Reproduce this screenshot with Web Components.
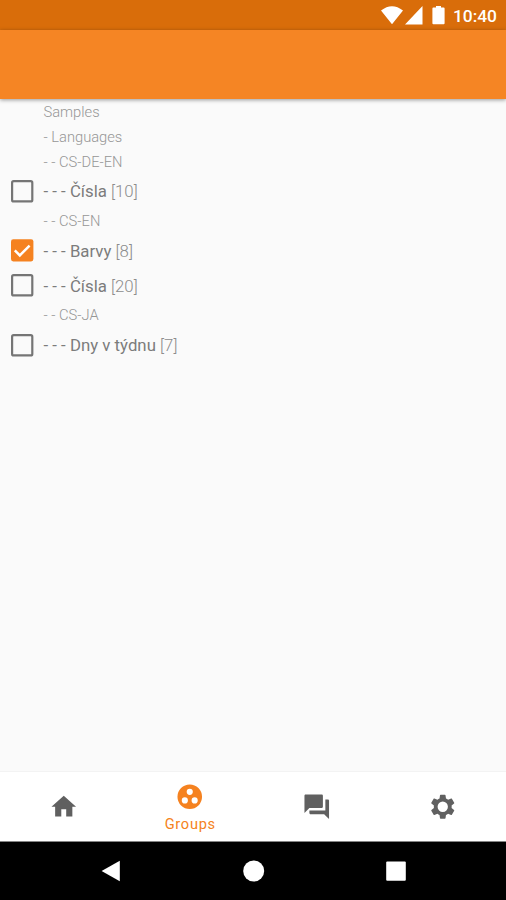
<!DOCTYPE html>
<html lang="cs"><head><meta charset="utf-8"><title>Groups</title>
<style>html,body{margin:0;height:100%;overflow:hidden}body{font-family:Roboto,"Noto Sans",sans-serif;background:#fafafa}</style></head>
<body><phone-app></phone-app>
<script>
const define=(name,html,init)=>customElements.define(name,class extends HTMLElement{
  connectedCallback(){ if(this.shadowRoot)return; this.attachShadow({mode:'open'}).innerHTML=html; if(init)init.call(this,this.shadowRoot); }
});
const icons={
 home:'<path d="M10 20v-6h4v6h5v-8h3L12 3 2 12h3v8z"/>',
 groups:'<path fill-rule="evenodd" d="M12 2a10 10 0 1 0 0 20 10 10 0 0 0 0-20zM8 17.5a2.5 2.5 0 1 1 0-5 2.5 2.5 0 0 1 0 5zM9.5 8a2.5 2.5 0 1 1 5 0 2.5 2.5 0 0 1-5 0zM16 17.5a2.5 2.5 0 1 1 0-5 2.5 2.5 0 0 1 0 5z"/>',
 chat:'<path d="M21 6h-2v9H6v2c0 .55.45 1 1 1h11l4 4V7c0-.55-.45-1-1-1zm-4 6V3c0-.55-.45-1-1-1H3c-.55 0-1 .45-1 1v14l4-4h10c.55 0 1-.45 1-1z"/>',
 settings:'<path d="M19.2 12.980c.04-.32.07-.64.07-.98s-.03-.66-.07-.98l2-1.650c.19-.15.24-.42.12-.64l-1.900-3.260c-.12-.22-.39-.3-.61-.22l-2.490 1c-.52-.4-1.080-.73-1.690-.98l-.38-2.650C14.210 2.380 14 2.200 13.750 2.200h-3.500c-.25 0-.46.18-.49.42l-.38 2.650c-.61.25-1.170.59-1.690.98l-2.490-1c-.23-.09-.49 0-.61.22l-1.900 3.260c-.13.22-.07.49.12.64l2 1.650c-.04.32-.07.65-.07.98s.03.66.07.98l-2 1.650c-.19.15-.24.42-.12.64l1.900 3.260c.12.22.39.3.61.22l2.490-1c.52.4 1.080.73 1.690.98l.38 2.650c.03.24.24.42.49.42h3.500c.25 0 .46-.18.49-.42l.38-2.650c.61-.25 1.170-.59 1.690-.98l2.490 1c.23.09.49 0 .61-.22l1.900-3.260c.12-.22.07-.49-.12-.64l-2-1.650zM12 16.200a4.200 4.200 0 1 1 0-8.400 4.200 4.200 0 0 1 0 8.400z"/>'
};
define('status-bar',`<style>:host{display:flex;box-sizing:border-box;height:30px;background:#d96d0a;color:#fff;justify-content:flex-end;align-items:center;padding-right:9px;font:500 17.400px/30px Roboto,sans-serif}svg{display:block;fill:#fff;margin-right:7px}span{padding-top:2px}</style>
<svg width="65" height="20" viewBox="381 5 65 20"><path d="M381 10.5Q392 1.8 403 10.5L392 24.3zM422.5 6v18.5H405zM436 6h5v1.6h2.6q1 0 1 1V23.3q0 1-1 1H433.400q-1 0-1-1V8.600q0-1 1-1H436z"/></svg><span>10:40</span>`);
define('tool-bar',`<style>:host{display:block;height:69px;background:#f58524;box-shadow:0 1px 4px rgba(0,0,0,.4);z-index:1}</style>`);
define('check-box',`<style>:host{display:block;width:23px;height:23px}svg{display:block}</style><svg width="23" height="23" viewBox="0 0 23 23"></svg>`,function(r){
 r.querySelector('svg').innerHTML=this.hasAttribute('checked')?'<rect x="0" y=".2" width="22.4" height="22.2" rx="2.300" fill="#f58220"/><path d="M3.800 11.400l5 5L18.600 6.600" fill="none" stroke="#fff" stroke-width="2.500"/>':'<rect x="1.100" y="1.200" width="20.200" height="20.200" rx="1.500" fill="none" stroke="#757575" stroke-width="2.200"/>';
});
define('group-label',`<style>:host{display:flex;align-items:center;height:24.700px;padding-left:43.500px;font-size:14.700px;font-weight:300;color:#969696;white-space:pre}</style><slot></slot>`);
define('group-row',`<style>:host{display:flex;align-items:center;height:34.800px;padding-left:11px;font-size:16.800px;color:#7c7c7c;white-space:pre}check-box{margin-right:9.500px}i{font-style:normal;font-weight:300;color:#8c8c8c}</style><check-box></check-box><span><slot></slot> <i></i></span>`,function(r){
 if(this.hasAttribute('checked')){const c=document.createElement('check-box');c.setAttribute('checked','');r.querySelector('check-box').replaceWith(c);}
 r.querySelector('i').textContent='['+this.getAttribute('count')+']';
});
define('nav-item',`<style>:host{display:flex;flex:1;flex-direction:column;align-items:center;justify-content:center;color:#606060}:host([active]){color:#f58220;padding-top:2px}svg{display:block;width:29.500px;height:29.500px;fill:currentColor}span{font-size:14.600px;line-height:17px;letter-spacing:.7px;margin-top:4px;padding-left:1px}span:empty{display:none}</style><svg viewBox="0 0 24 24"></svg><span></span>`,function(r){
 r.querySelector('svg').innerHTML=icons[this.getAttribute('icon')];r.querySelector('span').textContent=this.getAttribute('label')||'';
});
define('bottom-nav',`<style>:host{display:flex;box-sizing:border-box;height:70px;background:#fff;border-top:1px solid #f3f3f3}</style><nav-item icon="home"></nav-item><nav-item icon="groups" label="Groups" active></nav-item><nav-item icon="chat"></nav-item><nav-item icon="settings"></nav-item>`);
define('system-nav',`<style>:host{display:flex;box-sizing:border-box;height:59px;background:#000;border-top:1px solid #858585;justify-content:center;align-items:center;gap:120.500px;padding-left:1px}svg{width:22px;height:22px;fill:#fff;display:block}</style>
<svg viewBox="0 0 22 22"><path d="M19.800 .8v20.400L1.600 11z"/></svg><svg viewBox="0 0 22 22"><circle cx="10.700" cy="11" r="10.500"/></svg><svg viewBox="0 0 22 22"><rect x="1.200" y="1.500" width="19.600" height="19.300" rx="1"/></svg>`);
define('phone-app',`<style>:host{display:flex;flex-direction:column;width:506px;height:900px;background:#fafafa}main{flex:1;padding-top:1px}</style>
<status-bar></status-bar><tool-bar></tool-bar><main>
<group-label>Samples</group-label><group-label>- Languages</group-label><group-label>- - CS-DE-EN</group-label>
<group-row count="10">- - - Čísla</group-row><group-label>- - CS-EN</group-label>
<group-row count="8" checked>- - - Barvy</group-row><group-row count="20">- - - Čísla</group-row><group-label>- - CS-JA</group-label>
<group-row count="7">- - - Dny v týdnu</group-row></main><bottom-nav></bottom-nav><system-nav></system-nav>`);
</script></body></html>
